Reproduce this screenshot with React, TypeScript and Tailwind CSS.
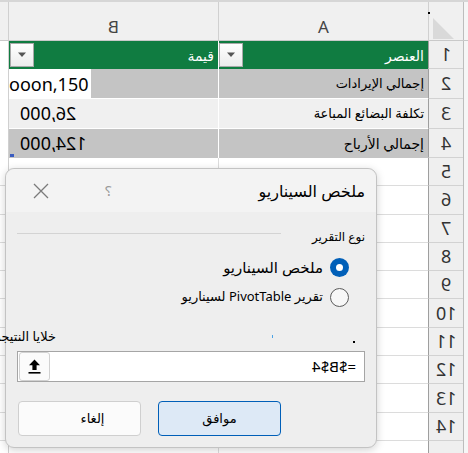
const rowsBelow = [5, 6, 7, 8, 9, 10, 11, 12, 13, 14, 0];

function Mirror({ children, className = "" }: { children: React.ReactNode; className?: string }) {
  return <span className={`inline-block -scale-x-100 ${className}`}>{children}</span>;
}

function FilterButton() {
  return (
    <div className="w-[24px] h-[24px] flex items-center justify-center bg-gradient-to-b from-white to-[#ececec] border border-[#a9a9a9]">
      <svg width="10" height="6" viewBox="0 0 10 6">
        <path d="M1 0.5h8L5 5z" fill="#555" />
      </svg>
    </div>
  );
}

function RowHeader({ n, last }: { n: number; last?: boolean }) {
  return (
    <div
      className={`w-[35px] shrink-0 border-l border-[#9e9e9e] bg-[#efefef] flex items-center justify-center text-[18px] text-[#333] ${
        last ? "" : "border-b border-b-[#d2d2d2]"
      }`}
    >
      {n > 0 && <Mirror>{n}</Mirror>}
    </div>
  );
}

function Sheet() {
  return (
    <div className="flex flex-col">
      {/* column headers */}
      <div className="flex h-[41px] border-t-2 border-[#d6d6d6] bg-[#f0f0f0] border-b border-b-[#c9c9c9]">
        <div className="w-[9px] shrink-0 border-r border-[#d0d0d0]" />
        <div className="w-[209px] shrink-0 flex items-center justify-center pt-[12px] text-[17px] text-[#444]">
          <Mirror>B</Mirror>
        </div>
        <div className="w-[210px] shrink-0 border-l border-[#d0d0d0] flex items-center justify-center pt-[12px] text-[17px] text-[#444]">
          A
        </div>
        <div className="w-[35px] shrink-0 border-l border-[#d0d0d0] relative">
          <span className="absolute left-[-1px] top-[10px] w-[2px] h-[2px] bg-black" />
          <svg className="absolute left-[4px] top-[16px]" width="21" height="21" viewBox="0 0 21 21">
            <path d="M0 0L0 21L21 21Z" fill="#d9d9d9" />
          </svg>
        </div>
        <div className="w-[5px] shrink-0 border-l border-[#bdbdbd] bg-[#f6f6f6]" />
      </div>

      {/* row 1: table header */}
      <div className="flex h-[28px]">
        <div className="w-[9px] shrink-0 border-r border-[#d0d0d0] bg-white" />
        <div className="w-[209px] shrink-0 bg-[#107c41] flex items-center justify-between pl-[1px] pr-[4px]">
          <FilterButton />
          <span dir="rtl" className="text-white text-[14px]">قيمة</span>
        </div>
        <div className="w-[210px] shrink-0 border-l border-white bg-[#107c41] flex items-center justify-between pr-[4px]">
          <FilterButton />
          <span dir="rtl" className="text-white text-[14px]">العنصر</span>
        </div>
        <RowHeader n={1} />
        <div className="w-[5px] shrink-0 border-l border-[#bdbdbd] bg-[#f6f6f6]" />
      </div>

      {/* row 2 */}
      <div className="flex h-[30px]">
        <div className="w-[9px] shrink-0 border-r border-[#d0d0d0] bg-white" />
        <div className="w-[209px] shrink-0 bg-[#c4c4c4] border-b border-white flex">
          <div className="w-[82px] h-full bg-white flex items-center text-[18px] text-black leading-none">
            ooon,150
          </div>
        </div>
        <div className="w-[210px] shrink-0 border-l border-white bg-[#c4c4c4] border-b border-b-white flex items-center justify-end pr-[4px]">
          <span dir="rtl" className="text-[13px] text-black">إجمالي الإيرادات</span>
        </div>
        <RowHeader n={2} />
        <div className="w-[5px] shrink-0 border-l border-[#bdbdbd] bg-[#f6f6f6]" />
      </div>

      {/* row 3 */}
      <div className="flex h-[30px]">
        <div className="w-[9px] shrink-0 border-r border-[#d0d0d0] bg-white" />
        <div className="w-[209px] shrink-0 bg-[#f0f0f0] border-b border-white flex items-center pl-[11px] text-[18px] text-black">
          <Mirror>26,000</Mirror>
        </div>
        <div className="w-[210px] shrink-0 border-l border-white bg-[#f0f0f0] border-b border-b-white flex items-center justify-end pr-[4px]">
          <span dir="rtl" className="text-[13px] text-black">تكلفة البضائع المباعة</span>
        </div>
        <RowHeader n={3} />
        <div className="w-[5px] shrink-0 border-l border-[#bdbdbd] bg-[#f6f6f6]" />
      </div>

      {/* row 4 */}
      <div className="flex h-[29px]">
        <div className="w-[9px] shrink-0 border-r border-[#d0d0d0] bg-white" />
        <div className="w-[209px] shrink-0 bg-[#c4c4c4] relative flex items-center pl-[11px] text-[18px] text-black">
          <Mirror>124,000</Mirror>
          <span className="absolute left-[1px] bottom-[1px] w-[4px] h-[3px] bg-[#3a5cc0]" />
        </div>
        <div className="w-[210px] shrink-0 border-l border-white bg-[#c4c4c4] flex items-center justify-end pr-[4px]">
          <span dir="rtl" className="text-[14px] text-black">إجمالي الأرباح</span>
        </div>
        <RowHeader n={4} />
        <div className="w-[5px] shrink-0 border-l border-[#bdbdbd] bg-[#f6f6f6]" />
      </div>

      {rowsBelow.map((n, i) => (
        <div key={i} className="flex h-[28.3px]">
          <div className="w-[9px] shrink-0 border-r border-[#d0d0d0] border-b border-b-[#dcdcdc] bg-white" />
          <div className="w-[209px] shrink-0 bg-white border-b border-[#dcdcdc]" />
          <div className="w-[210px] shrink-0 border-l border-[#dcdcdc] bg-white border-b border-b-[#dcdcdc]" />
          <RowHeader n={n} />
          <div className="w-[5px] shrink-0 border-l border-[#bdbdbd] bg-[#f6f6f6]" />
        </div>
      ))}
    </div>
  );
}

function ScenarioDialog() {
  return (
    <div className="absolute left-[5px] top-[168px] w-[372px] h-[280px] rounded-[9px] border border-[#c3c3c3] bg-[#eeeeee] shadow-[0_2px_8px_rgba(0,0,0,0.18)] flex flex-col">
      {/* title bar */}
      <div className="h-[43px] shrink-0 rounded-t-[9px] bg-[#f3f3f3] flex items-center pl-[27px] pr-[11px]">
        <svg width="16" height="16" viewBox="0 0 16 16" className="shrink-0">
          <path d="M1 1L15 15M15 1L1 15" stroke="#7a7a7a" strokeWidth="1.3" />
        </svg>
        <Mirror className="ml-[56px] text-[15px] text-[#9a9a9a]">?</Mirror>
        <span dir="rtl" className="ml-auto text-[16px] text-black">ملخص السيناريو</span>
      </div>

      {/* body */}
      <div className="flex-1 flex flex-col pt-[15px] pb-[12px] px-[11px]">
        <div className="flex h-[20px] items-start">
          <div className="w-[264px] h-px bg-[#d3d3d3] mt-[6px]" />
          <span dir="rtl" className="ml-auto text-[12px] text-black leading-[20px]">نوع التقرير</span>
        </div>

        <div className="mt-[8px] h-[24px] flex items-center justify-end pr-[16px] gap-[7px]">
          <span dir="rtl" className="text-[15px] text-black">ملخص السيناريو</span>
          <span className="w-[19px] h-[19px] rounded-full bg-[#005fb8] flex items-center justify-center">
            <span className="w-[7px] h-[7px] rounded-full bg-white" />
          </span>
        </div>

        <div className="mt-[8px] h-[20px] flex items-center justify-end pr-[16px] gap-[7px]">
          <span dir="rtl" className="text-[13px] text-black">تقرير PivotTable لسيناريو</span>
          <span className="w-[19px] h-[19px] rounded-full border border-[#5c5c5c] bg-[#f7f7f7]" />
        </div>

        <div className="mt-[20px] h-[18px] flex items-center">
          <span dir="rtl" className="ml-[-26px] text-[13px] text-black leading-none">خلايا النتيجة:</span>
          <span className="ml-[216px] w-[1px] h-[3px] bg-[#4aa3e6]" />
          <span className="ml-[80px] mt-[12px] w-[2px] h-[2px] bg-black" />
        </div>

        <div className="mt-[6px] h-[31px] flex items-center bg-white border border-[#a5a5a5] pl-[1px]">
          <div className="w-[31px] h-[29px] rounded-[3px] border border-[#d1d1d1] bg-[#fbfbfb] flex items-center justify-center">
            <svg width="13" height="15" viewBox="0 0 13 15">
              <path d="M6.5 0.5L12 6.2H8.6V11H4.4V6.2H1Z" fill="#000" />
              <rect x="0.5" y="13" width="12" height="1.6" fill="#000" />
            </svg>
          </div>
          <Mirror className="ml-auto mr-[8px] text-[15px] text-black">=$B$4</Mirror>
        </div>

        <div className="mt-[19px] flex gap-[17px] pl-[1px]">
          <button className="w-[123px] h-[35px] rounded-[4px] border border-[#cfcfcf] bg-[#fbfbfb] text-[13px] text-black pl-[26px]">
            <span dir="rtl">إلغاء</span>
          </button>
          <button className="w-[123px] h-[35px] rounded-[4px] border border-[#005fb8] bg-[#dde9f6] text-[13px] text-black">
            <span dir="rtl">موافق</span>
          </button>
        </div>
      </div>
    </div>
  );
}

export default function App() {
  return (
    <div className="relative w-[468px] h-[453px] overflow-hidden bg-white font-['Noto_Sans','DejaVu_Sans',sans-serif]">
      <Sheet />
      <ScenarioDialog />
    </div>
  );
}
